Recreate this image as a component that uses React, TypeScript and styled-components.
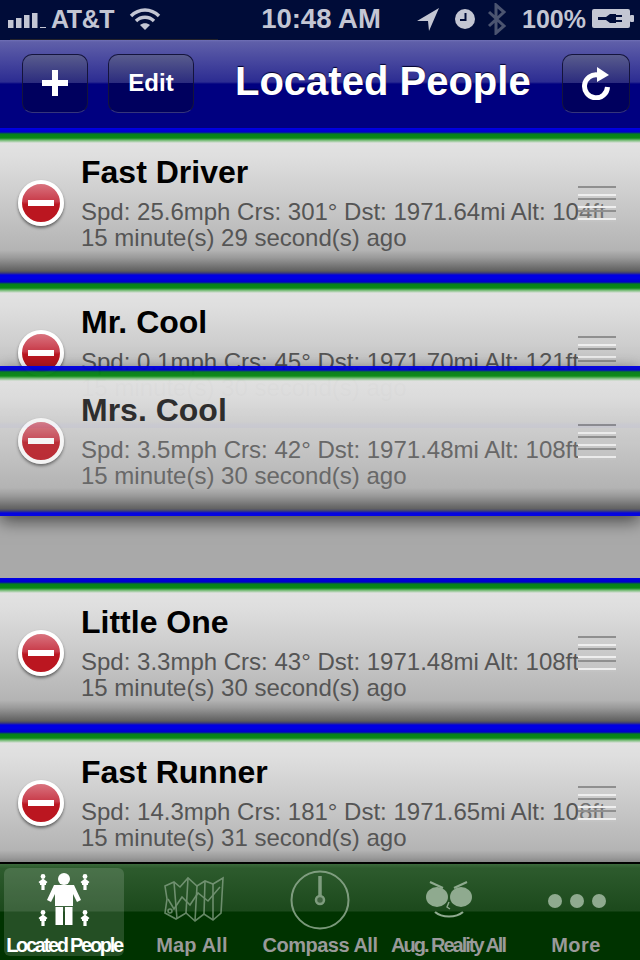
import React from 'react';
import styled, { createGlobalStyle } from 'styled-components';

type Person = { name: string; spd: string; crs: string; dst: string; alt: string; ago: string };

const people: Person[] = [
  { name: 'Fast Driver', spd: '25.6', crs: '301', dst: '1971.64', alt: '104', ago: '15 minute(s) 29 second(s) ago' },
  { name: 'Mr. Cool', spd: '0.1', crs: '45', dst: '1971.70', alt: '121', ago: '15 minute(s) 30 second(s) ago' },
  { name: 'Little One', spd: '3.3', crs: '43', dst: '1971.48', alt: '108', ago: '15 minute(s) 30 second(s) ago' },
  { name: 'Fast Runner', spd: '14.3', crs: '181', dst: '1971.65', alt: '108', ago: '15 minute(s) 31 second(s) ago' },
];

const dragged: Person = { name: 'Mrs. Cool', spd: '3.5', crs: '42', dst: '1971.48', alt: '108', ago: '15 minute(s) 30 second(s) ago' };

const GlobalStyle = createGlobalStyle`
  html, body {
    margin: 0;
    padding: 0;
    background: #000;
  }
`;

const Screen = styled.div`
  width: 640px;
  height: 960px;
  display: flex;
  flex-direction: column;
  overflow: hidden;
  font-family: "Liberation Sans", Arial, sans-serif;
`;

const StatusBar = styled.div`
  position: relative;
  height: 40px;
  flex: none;
  display: grid;
  grid-template-columns: 1fr auto 1fr;
  align-items: center;
  padding: 0 6px 2px 8px;
  box-sizing: border-box;
  background: #000c38;
  color: #c3c6d3;
  font-size: 25px;

  &::after {
    content: '';
    position: absolute;
    left: 10px;
    bottom: 0;
    width: 208px;
    height: 1px;
    background: #23232b;
  }
`;

const StatusGroup = styled.div<{ $right?: boolean }>`
  display: flex;
  align-items: center;
  justify-content: ${(p) => (p.$right ? 'flex-end' : 'flex-start')};
`;

const Carrier = styled.span`
  margin: 0 15px 0 5px;
  font-weight: bold;
  font-size: 25px;
  letter-spacing: -0.4px;
`;

const Clock = styled.span`
  font-weight: bold;
  font-size: 27.5px;
`;

const Spacer = styled.span<{ $width: number }>`
  width: ${(p) => p.$width}px;
`;

const Percent = styled.span`
  margin: 0 6px 0 15px;
  font-weight: bold;
  font-size: 25px;
`;

const NavBar = styled.div`
  height: 88px;
  flex: none;
  display: flex;
  align-items: center;
  padding: 0 10px 1px 22px;
  box-sizing: border-box;
  background: linear-gradient(#7070b6 0, #5f5fa9 2px, #2c2c92 42px, #000080 44px, #000080 100%);
`;

const NavButton = styled.div<{ $width: number }>`
  width: ${(p) => p.$width}px;
  height: 59px;
  margin-right: 20px;
  padding-bottom: 2px;
  flex: none;
  display: flex;
  align-items: center;
  justify-content: center;
  box-sizing: border-box;
  border: 1px solid #14143c;
  border-bottom-color: #35357a;
  border-radius: 10px;
  background: linear-gradient(#595c8d 0, #2a2a7e 50%, #00005e 50%, #00005e 100%);
  color: #fff;
  font-size: 24px;
  font-weight: bold;
`;

const NavTitle = styled.div`
  flex: 1;
  margin: 0 0 4px 21px;
  color: #fff;
  font-size: 40px;
  font-weight: bold;
  white-space: nowrap;
  text-shadow: 0 -1px 1px #00002c;
`;

const RefreshButton = styled(NavButton)`
  margin-right: 0;
`;

const List = styled.div`
  position: relative;
  flex: 1;
  min-height: 0;
  overflow: hidden;
  background: #a9a9a9;
`;

const Row = styled.div`
  position: relative;
  height: 150px;
  box-sizing: border-box;
  display: flex;
  align-items: center;
  padding-left: 18px;
  background: linear-gradient(
    #0000e6 0,
    #0000c8 4px,
    #06801a 6px,
    #0a8a14 10px,
    #7fc07f 12.5px,
    #e2e2e2 15px,
    #dedede 30px,
    #b4b4b4 122px,
    #999 130px,
    #5f5f5f 143px,
    #3c3c78 145px,
    #0000e0 147px,
    #0000e6 150px
  );
`;

const Placeholder = styled.div`
  height: 150px;
`;

const DeleteBadge = styled.div`
  position: relative;
  width: 46px;
  height: 46px;
  flex: none;
  display: flex;
  align-items: center;
  justify-content: center;
  box-sizing: border-box;
  border: 4px solid #fff;
  border-radius: 50%;
  background: linear-gradient(#d9737f 0, #c83a48 46%, #bb1620 54%, #bb1620 100%);
  box-shadow: 0 2px 3px rgba(0, 0, 0, 0.5);
`;

const DeleteBar = styled.div`
  width: 26px;
  height: 6px;
  background: #fff;
`;

const RowText = styled.div`
  margin-left: 17px;
  white-space: nowrap;
`;

const Name = styled.div`
  color: #000;
  font-size: 32px;
  font-weight: bold;
  line-height: 34px;
  margin-bottom: 10px;
`;

const Detail = styled.div`
  color: #555;
  font-size: 24px;
  line-height: 26px;
`;

const Grip = styled.div`
  position: absolute;
  top: 58px;
  right: 24px;
  width: 38px;
  height: 36px;
  background: rgba(205, 205, 205, 0.25);
  background-image: repeating-linear-gradient(
    #8f8f8f 0,
    #8f8f8f 2px,
    transparent 2px,
    transparent 8px,
    #eee 8px,
    #eee 10px,
    transparent 10px,
    transparent 12px
  );
`;

const DraggedRow = styled(Row)`
  position: absolute;
  top: 238px;
  left: 0;
  right: 0;
  opacity: 0.97;
  box-shadow: 0 5px 16px rgba(0, 0, 0, 0.6);

  ${Name} {
    color: #2b2b2b;
  }

  ${Detail} {
    color: #666;
  }

  ${DeleteBadge} {
    opacity: 0.88;
  }
`;

const TabBar = styled.div`
  height: 98px;
  flex: none;
  display: flex;
  box-sizing: border-box;
  padding-top: 4px;
  border-top: 2px solid #000;
  background: linear-gradient(#3c6a3c 0, #2d5b2d 4px, #1c491c 47px, #003300 48px, #003300 100%);
`;

const Tab = styled.div<{ $active?: boolean }>`
  flex: 1;
  min-width: 0;
  display: flex;
  flex-direction: column;
  align-items: center;
  height: 88px;
  margin: 0 4px;
  border-radius: 6px;
  background: ${(p) => (p.$active ? 'rgba(255, 255, 255, 0.14)' : 'transparent')};
  color: ${(p) => (p.$active ? '#fff' : '#8faa8f')};
`;

const TabIcon = styled.svg`
  width: 120px;
  height: 64px;
  margin-top: 2px;
  flex: none;
`;

const TabLabel = styled.div<{ $active?: boolean; $tracking: number }>`
  margin-top: -1px;
  color: ${(p) => (p.$active ? '#fff' : '#9a9a9a')};
  font-size: 20px;
  font-weight: bold;
  line-height: 24px;
  white-space: nowrap;
  letter-spacing: ${(p) => p.$tracking}px;
`;

function SignalIcon() {
  return (
    <svg width="38" height="20" viewBox="0 0 38 20">
      <g fill="#c3c6d3">
        <rect x="0" y="11" width="5.5" height="8" />
        <rect x="8" y="9" width="5.5" height="10" />
        <rect x="16" y="6" width="5.5" height="13" />
        <rect x="24" y="4" width="5.5" height="15" />
        <rect x="32" y="18" width="6" height="1" />
      </g>
    </svg>
  );
}

function WifiIcon() {
  return (
    <svg width="32" height="24" viewBox="0 0 32 24" fill="none" stroke="#c3c6d3" strokeWidth="3.4">
      <path d="M2 9 C10 1 22 1 30 9" />
      <path d="M7 14 C12 9 20 9 25 14" />
      <path d="M16 23 L11 18 C14 15.5 18 15.5 21 18 Z" fill="#c3c6d3" stroke="none" />
    </svg>
  );
}

function LocationIcon() {
  return (
    <svg width="24" height="24" viewBox="0 0 24 24">
      <path d="M23 1 L1 14 L12 14 L13 24 Z" fill="#c3c6d3" />
    </svg>
  );
}

function AlarmClockIcon() {
  return (
    <svg width="20" height="20" viewBox="0 0 20 20">
      <circle cx="10" cy="10" r="10" fill="#c3c6d3" />
      <path d="M10.5 4 V11 H5" fill="none" stroke="#000c38" strokeWidth="2" />
    </svg>
  );
}

function BluetoothIcon() {
  return (
    <svg width="20" height="32" viewBox="0 0 20 32" fill="none" stroke="#4b5470" strokeWidth="3">
      <path d="M2 9 L17 23 L9 30 V2 L17 9 L2 23" />
    </svg>
  );
}

function BatteryIcon() {
  return (
    <svg width="42" height="20" viewBox="0 0 42 20">
      <rect x="0" y="0" width="38" height="19" rx="2" fill="#c3c6d3" />
      <rect x="38" y="6" width="4" height="7" rx="1" fill="#c3c6d3" />
      <path d="M6 8 H14 L18 5 H24 V14 H18 L14 11 H6 Z" fill="#000c38" />
      <path d="M24 7 H30 M24 12 H30" stroke="#000c38" strokeWidth="2" />
    </svg>
  );
}

function PlusIcon() {
  return (
    <svg width="28" height="28" viewBox="0 0 28 28">
      <path d="M11 1 H17 V11 H27 V17 H17 V27 H11 V17 H1 V11 H11 Z" fill="#fff" />
    </svg>
  );
}

function RefreshIcon() {
  return (
    <svg width="32" height="34" viewBox="0 0 32 34">
      <path d="M18 9 A11.5 11.5 0 1 0 27.5 21" fill="none" stroke="#fff" strokeWidth="5" />
      <path d="M17 1 L29 9 L17 16 Z" fill="#fff" />
    </svg>
  );
}

function TinyPerson({ x, y }: { x: number; y: number }) {
  return (
    <g transform={`translate(${x} ${y})`} fill="currentColor">
      <circle cx="0" cy="1.5" r="2.4" />
      <path d="M-4.5 7 L0 3.5 L4.5 7 L3 8.5 V10 H1.6 V15 H-1.6 V10 H-3 V8.5 Z" />
    </g>
  );
}

function PeopleIcon() {
  return (
    <TabIcon viewBox="0 0 120 64">
      <g fill="currentColor">
        <circle cx="60" cy="9" r="6" />
        <path d="M50 15 H70 L77 30 L73 32 L69 24 V36 H51 V24 L47 32 L43 30 Z" />
        <rect x="51.5" y="37" width="7.5" height="18" />
        <rect x="61" y="37" width="7.5" height="18" />
      </g>
      <TinyPerson x={39} y={5} />
      <TinyPerson x={81} y={5} />
      <TinyPerson x={39} y={41} />
      <TinyPerson x={81} y={41} />
    </TabIcon>
  );
}

function MapIcon() {
  return (
    <TabIcon viewBox="4 -3 120 64" fill="none" stroke="currentColor" strokeWidth="1.6" opacity="0.7">
      <path d="M37 13 L46 9 L52 14 L60 5 L69 13 L77 8 L85 11 L95 5 L93 40 L85 47 L76 41 L67 48 L58 40 L48 46 L37 40 L39 26 Z" />
      <path d="M46 9 L49 46 M60 5 L58 40 M69 13 L67 48 M77 8 L76 41 M85 11 L85 47" />
      <path d="M40 26 L46 36 L54 24 L62 32 L70 20 L80 28 L92 14" />
      <circle cx="42" cy="38" r="2" />
    </TabIcon>
  );
}

function CompassIcon() {
  return (
    <TabIcon viewBox="4 2 120 64" fill="none" stroke="currentColor" opacity="0.85">
      <circle cx="64" cy="32" r="28.5" strokeWidth="2" />
      <path d="M64 8 V30" strokeWidth="3.5" />
      <circle cx="64" cy="32" r="4" strokeWidth="2.5" fill="#4a6a4a" />
    </TabIcon>
  );
}

function FaceIcon() {
  return (
    <TabIcon viewBox="4 2 120 64" fill="none" stroke="currentColor" strokeWidth="2.2">
      <ellipse cx="53" cy="29" rx="11" ry="10" fill="currentColor" stroke="none" />
      <ellipse cx="77" cy="29" rx="11" ry="10" fill="currentColor" stroke="none" />
      <path d="M46 14 L59 20 M83 14 L70 20" />
      <path d="M65 34 L63 39 L66 41" strokeWidth="1.4" />
      <path d="M51 44 C58 50 72 50 79 44" />
    </TabIcon>
  );
}

function MoreIcon() {
  return (
    <TabIcon viewBox="4 2 120 64" fill="currentColor">
      <circle cx="43" cy="33" r="7" />
      <circle cx="65" cy="33" r="7" />
      <circle cx="87" cy="33" r="7" />
    </TabIcon>
  );
}

function PersonRow({ person }: { person: Person }) {
  return (
    <>
      <DeleteBadge>
        <DeleteBar />
      </DeleteBadge>
      <RowText>
        <Name>{person.name}</Name>
        <Detail>
          Spd: {person.spd}mph Crs: {person.crs}° Dst: {person.dst}mi Alt: {person.alt}ft
        </Detail>
        <Detail>{person.ago}</Detail>
      </RowText>
      <Grip />
    </>
  );
}

const tabs = [
  { label: 'Located People', icon: <PeopleIcon />, tracking: -2.3, active: true },
  { label: 'Map All', icon: <MapIcon />, tracking: 0.15 },
  { label: 'Compass All', icon: <CompassIcon />, tracking: -0.5 },
  { label: 'Aug. Reality All', icon: <FaceIcon />, tracking: -2 },
  { label: 'More', icon: <MoreIcon />, tracking: 0.4 },
];

export default function App() {
  return (
    <Screen>
      <GlobalStyle />
      <StatusBar>
        <StatusGroup>
          <SignalIcon />
          <Carrier>AT&amp;T</Carrier>
          <WifiIcon />
        </StatusGroup>
        <Clock>10:48 AM</Clock>
        <StatusGroup $right>
          <LocationIcon />
          <Spacer $width={15} />
          <AlarmClockIcon />
          <Spacer $width={12} />
          <BluetoothIcon />
          <Percent>100%</Percent>
          <BatteryIcon />
        </StatusGroup>
      </StatusBar>
      <NavBar>
        <NavButton $width={66}>
          <PlusIcon />
        </NavButton>
        <NavButton $width={86}>Edit</NavButton>
        <NavTitle>Located People</NavTitle>
        <RefreshButton $width={68}>
          <RefreshIcon />
        </RefreshButton>
      </NavBar>
      <List>
        <Row>
          <PersonRow person={people[0]} />
        </Row>
        <Row>
          <PersonRow person={people[1]} />
        </Row>
        <Placeholder />
        <Row>
          <PersonRow person={people[2]} />
        </Row>
        <Row>
          <PersonRow person={people[3]} />
        </Row>
        <DraggedRow>
          <PersonRow person={dragged} />
        </DraggedRow>
      </List>
      <TabBar>
        {tabs.map((tab) => (
          <Tab key={tab.label} $active={tab.active}>
            {tab.icon}
            <TabLabel $active={tab.active} $tracking={tab.tracking}>
              {tab.label}
            </TabLabel>
          </Tab>
        ))}
      </TabBar>
    </Screen>
  );
}
